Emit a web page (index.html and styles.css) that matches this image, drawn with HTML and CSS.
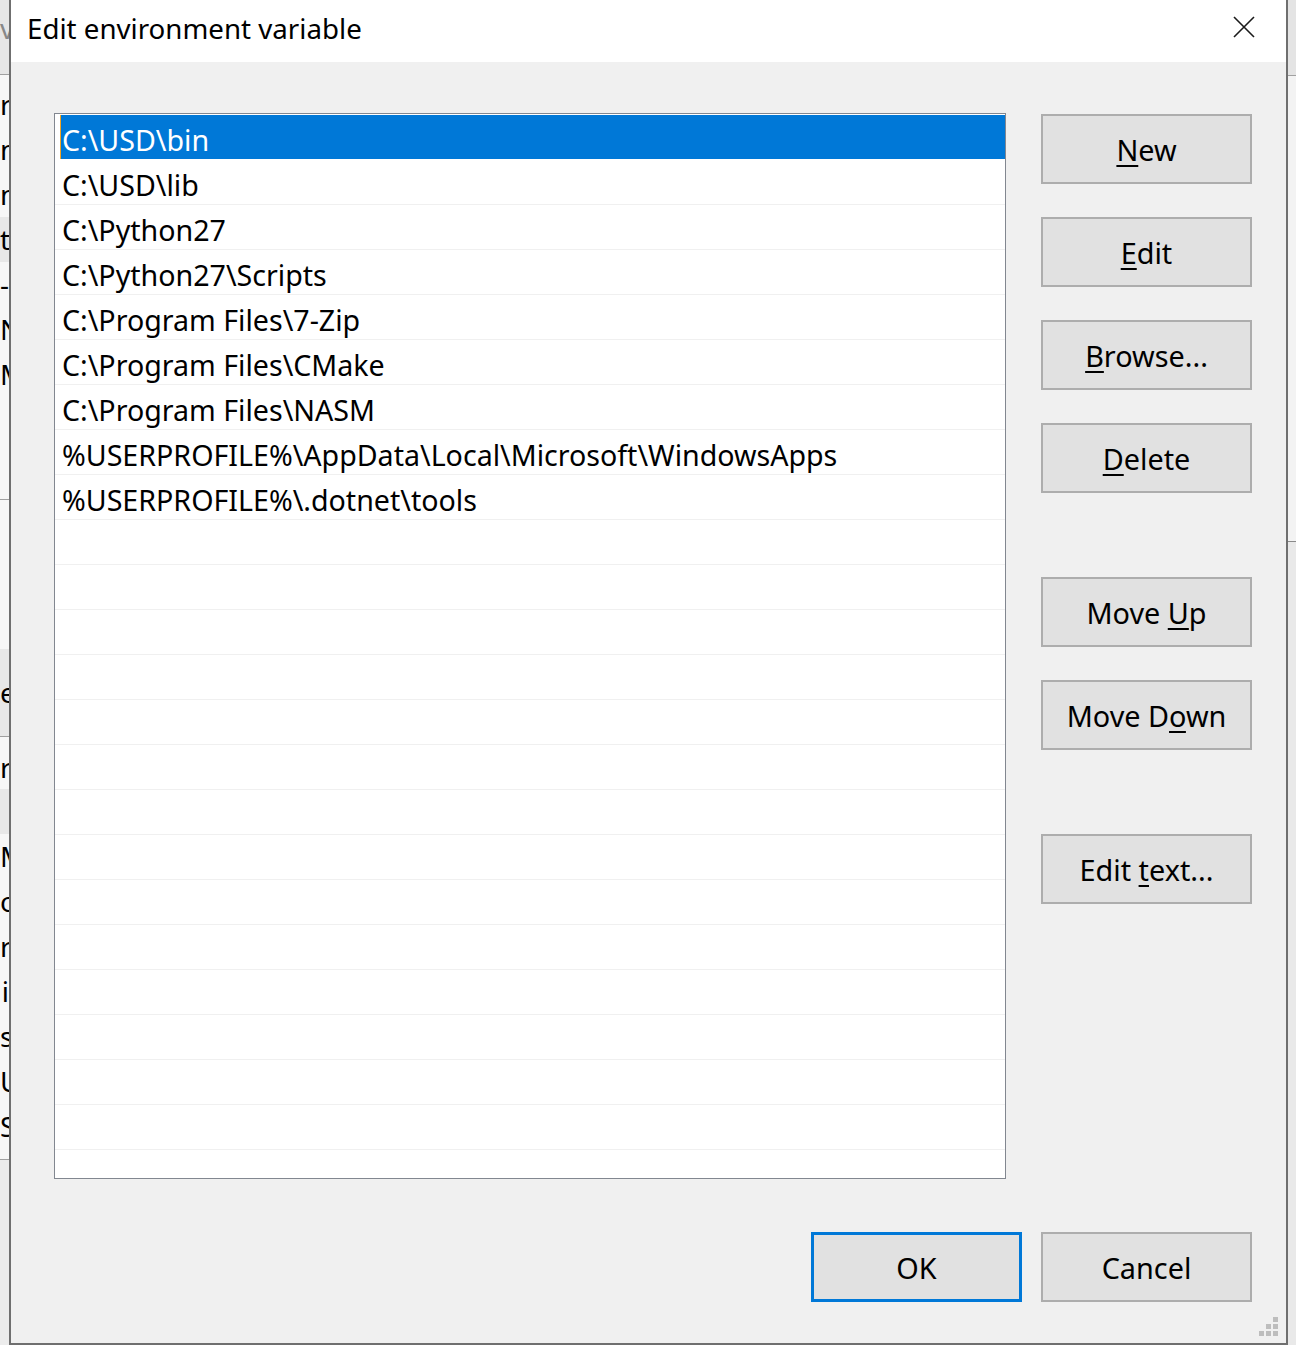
FILE: index.html
```html
<!DOCTYPE html>
<html lang="en">
<head>
    <meta charset="UTF-8">
    <title>Edit environment variable</title>
    <link rel="stylesheet" href="styles.css">
</head>
<body>
    <div class="behind-left">
        <div class="bl-top"><span>v</span></div>
        <div class="bl-line">r</div>
        <div class="bl-line">n</div>
        <div class="bl-line">n</div>
        <div class="bl-line shade">t</div>
        <div class="bl-line">-</div>
        <div class="bl-line">N</div>
        <div class="bl-line">M</div>
        <div class="bl-gap"></div>
        <div class="bl-gap2"></div>
        <div class="bl-band">e</div>
        <div class="bl-tall">r</div>
        <div class="bl-line shade"></div>
        <div class="bl-line">M</div>
        <div class="bl-line">o</div>
        <div class="bl-line">r</div>
        <div class="bl-line">i</div>
        <div class="bl-line">s</div>
        <div class="bl-line">U</div>
        <div class="bl-line">S</div>
        <div class="bl-end"></div>
        <div class="bl-rest"></div>
    </div>

    <div class="dialog">
        <div class="titlebar">
            <span class="title">Edit environment variable</span>
            <svg class="close" width="22" height="22" viewBox="0 0 22 22">
                <path d="M1 1 L21 21 M21 1 L1 21" stroke="#1a1a1a" stroke-width="1.6" fill="none"/>
            </svg>
        </div>

        <div class="content">
            <div class="main">
                <div class="list">
                    <div class="row selected"><span class="cell">C:\USD\bin</span></div>
                    <div class="row"><span class="cell">C:\USD\lib</span></div>
                    <div class="row"><span class="cell">C:\Python27</span></div>
                    <div class="row"><span class="cell">C:\Python27\Scripts</span></div>
                    <div class="row"><span class="cell">C:\Program Files\7-Zip</span></div>
                    <div class="row"><span class="cell">C:\Program Files\CMake</span></div>
                    <div class="row"><span class="cell">C:\Program Files\NASM</span></div>
                    <div class="row"><span class="cell">%USERPROFILE%\AppData\Local\Microsoft\WindowsApps</span></div>
                    <div class="row"><span class="cell">%USERPROFILE%\.dotnet\tools</span></div>
                    <div class="row"></div>
                    <div class="row"></div>
                    <div class="row"></div>
                    <div class="row"></div>
                    <div class="row"></div>
                    <div class="row"></div>
                    <div class="row"></div>
                    <div class="row"></div>
                    <div class="row"></div>
                    <div class="row"></div>
                    <div class="row"></div>
                    <div class="row"></div>
                    <div class="row"></div>
                    <div class="row"></div>
                    <div class="row"></div>
                </div>

                <div class="side-buttons">
                    <button class="btn"><u>N</u>ew</button>
                    <button class="btn"><u>E</u>dit</button>
                    <button class="btn"><u>B</u>rowse...</button>
                    <button class="btn"><u>D</u>elete</button>
                    <button class="btn group-start">Move <u>U</u>p</button>
                    <button class="btn">Move D<u>o</u>wn</button>
                    <button class="btn group-start">Edit <u>t</u>ext...</button>
                </div>
            </div>

            <div class="footer">
                <button class="btn default">OK</button>
                <button class="btn">Cancel</button>
            </div>

            <svg class="grip" width="20" height="20" viewBox="0 0 20 20">
                <rect x="14" y="0" width="5" height="5" fill="#bdbdbd"/>
                <rect x="7" y="7" width="5" height="5" fill="#bdbdbd"/>
                <rect x="14" y="7" width="5" height="5" fill="#bdbdbd"/>
                <rect x="0" y="14" width="5" height="5" fill="#bdbdbd"/>
                <rect x="7" y="14" width="5" height="5" fill="#bdbdbd"/>
                <rect x="14" y="14" width="5" height="5" fill="#bdbdbd"/>
            </svg>
        </div>
    </div>

    <div class="behind-right">
        <div class="br-top"></div>
        <div class="br-mid"></div>
        <div class="br-rest"></div>
    </div>
</body>
</html>
```

FILE: styles.css
```css
body {
    margin: 0;
    width: 1296px;
    height: 1345px;
    overflow: hidden;
    display: flex;
    background: #f0f0f0;
    font-family: "Noto Sans", "Open Sans", sans-serif;
    color: #000;
}

/* window behind, left edge */
.behind-left {
    width: 9px;
    overflow: hidden;
    background: #f7f7f7;
    font-size: 28px;
    display: flex;
    flex-direction: column;
}
.behind-left > div {
    flex-shrink: 0;
    text-align: right;
    white-space: nowrap;
}
.bl-top {
    height: 75px;
    background: #e6e6e6;
    border-bottom: 1px solid #a0a0a0;
    margin-bottom: 7px;
    box-sizing: border-box;
    color: #888;
    line-height: 56px;
}
.bl-line {
    height: 45px;
    line-height: 45px;
}
.bl-line.shade {
    background: #e8e8e8;
}
.bl-gap {
    height: 102px;
    border-bottom: 1px solid #a0a0a0;
}
.bl-gap2 {
    height: 149px;
}
.bl-band {
    height: 87px;
    line-height: 87px;
    background: #e8e8e8;
    border-bottom: 1px solid #a0a0a0;
}
.bl-tall {
    height: 52px;
    line-height: 60px;
}
.bl-end {
    height: 10px;
    border-bottom: 1px solid #a0a0a0;
}
.bl-rest {
    flex: 1;
    background: #ececec;
}

/* dialog */
.dialog {
    width: 1279px;
    height: 1345px;
    box-sizing: border-box;
    border: 2px solid #6f6f6f;
    border-top: none;
    background: #f0f0f0;
    display: flex;
    flex-direction: column;
    flex-shrink: 0;
}
.titlebar {
    height: 62px;
    background: #fff;
    display: flex;
    align-items: center;
    justify-content: space-between;
    padding: 0 31px 0 16px;
    flex-shrink: 0;
}
.title {
    font-size: 27.7px;
    padding-bottom: 7px;
}
.close {
    margin-bottom: 8px;
}

.content {
    flex: 1;
    position: relative;
    padding: 51px 34px 0 43px;
}
.main {
    display: flex;
    gap: 35px;
}

.list {
    width: 952px;
    height: 1066px;
    box-sizing: border-box;
    border: 1px solid #828790;
    background: #fff;
    padding-top: 1px;
    overflow: hidden;
}
.row {
    height: 44px;
    border-bottom: 1px solid #f0f0f0;
    padding-left: 5px;
}
.cell {
    display: block;
    height: 44px;
    line-height: 49px;
    padding-left: 2px;
    font-size: 28.6px;
    white-space: nowrap;
    overflow: hidden;
}
.row.selected {
    border-bottom-color: #fff;
}
.row.selected .cell {
    background: #0078d7;
    color: #fff;
    box-shadow: inset 1px 0 0 #f5a623;
}

.side-buttons {
    display: flex;
    flex-direction: column;
    gap: 33px;
    padding-top: 1px;
}
.btn {
    width: 211px;
    height: 70px;
    box-sizing: border-box;
    background: #e1e1e1;
    border: 2px solid #adadad;
    font-family: inherit;
    font-size: 28.8px;
    color: #000;
    padding: 0;
}
.btn u {
    text-underline-offset: 4px;
    text-decoration-thickness: 1.5px;
}
.btn.group-start {
    margin-top: 51px;
}
.btn.default {
    border: 3px solid #0078d7;
}

.footer {
    display: flex;
    justify-content: flex-end;
    gap: 19px;
    margin-top: 53px;
}

.grip {
    position: absolute;
    right: 7px;
    bottom: 6px;
}

/* window behind, right edge */
.behind-right {
    flex: 1;
    display: flex;
    flex-direction: column;
    background: #f3f3f3;
}
.br-top {
    height: 75px;
    background: #e4e4e4;
    border-bottom: 1px solid #a0a0a0;
}
.br-mid {
    height: 465px;
    border-bottom: 1px solid #8a8a8a;
}
.br-rest {
    flex: 1;
    background: #e9e9e9;
}
```
